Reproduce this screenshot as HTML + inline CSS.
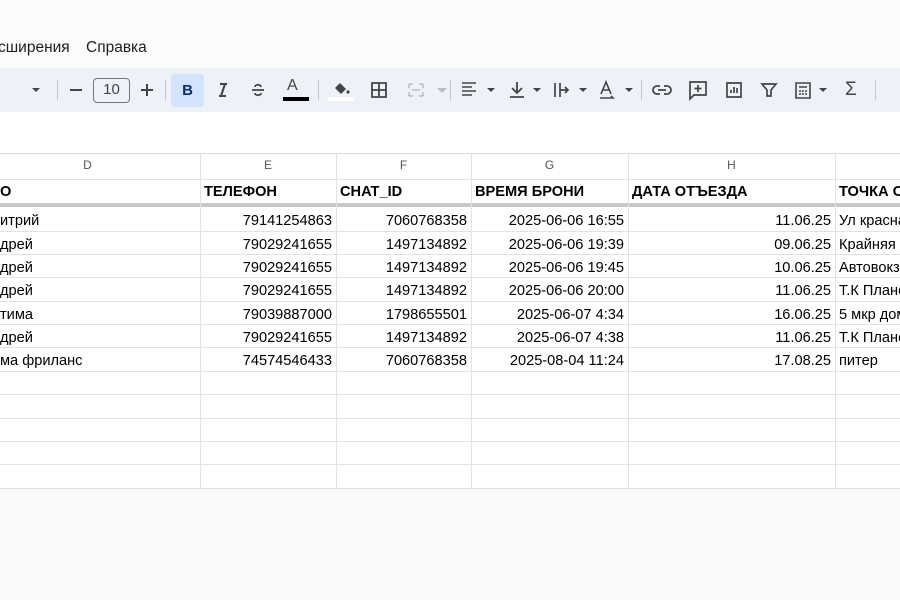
<!DOCTYPE html>
<html><head><meta charset="utf-8"><style>
*{margin:0;padding:0;box-sizing:border-box}
body{width:900px;height:600px;overflow:hidden;background:#f8f9fa;font-family:"Liberation Sans",Arial,sans-serif;position:relative;color:#000}
.a{position:absolute}
.top{left:0;top:0;width:900px;height:68px;background:#f9fbfd}
.tb{left:0;top:68px;width:900px;height:44px;background:#eef2f8}
.fx{left:0;top:112px;width:900px;height:41px;background:#fff}
.menu{top:39px;font-size:15.5px;color:#1f1f1f}
.ic{position:absolute;top:78px;width:24px;height:24px}
.sep{position:absolute;top:80px;width:1px;height:20px;background:#c7c7c7}
.grid{left:0;top:153px;width:900px;height:336px;background:#fff}
.hl{position:absolute;left:0;width:900px;height:1px;background:#e2e2e2}
.vl{position:absolute;top:153px;width:1px;height:336px;background:#e2e2e2}
.ch{position:absolute;top:158px;font-size:12px;color:#555;text-align:center}
.t{position:absolute;font-size:14.6px;white-space:nowrap;margin-top:2px}
.b{font-weight:bold}
.r{text-align:right}
</style></head><body>
<div class="a top"></div>
<div class="menu a" style="left:-2px">сширения</div>
<div class="menu a" style="left:86px">Справка</div>
<div class="a tb"></div>
<div class="a fx"></div>
<!-- toolbar -->
<svg class="ic" style="left:24px" viewBox="0 0 24 24"><path d="M8 10l4 4 4-4z" fill="#444"/></svg>
<div class="sep" style="left:57px"></div>
<svg class="ic" style="left:64px" viewBox="0 0 24 24"><path d="M6 12h12" stroke="#444" stroke-width="2"/></svg>
<div class="a" style="left:93px;top:78px;width:37px;height:25px;border:1.5px solid #747775;border-radius:4px;font-size:15px;color:#444;text-align:center;line-height:22px">10</div>
<svg class="ic" style="left:135px" viewBox="0 0 24 24"><path d="M6 12h12M12 6v12" stroke="#444" stroke-width="2"/></svg>
<div class="sep" style="left:165px"></div>
<div class="a" style="left:171px;top:74px;width:33px;height:33px;background:#d3e3fd;border-radius:4px;font-weight:bold;font-size:15px;color:#0b3069;text-align:center;line-height:33px">B</div>
<svg class="ic" style="left:211px" viewBox="0 0 24 24"><path d="M9 6h7M8 18h7M14 6l-4 12" stroke="#444" stroke-width="2" fill="none"/></svg>
<svg class="ic" style="left:246px" viewBox="0 0 24 24"><path d="M6 12h12M9 9c0-3 6-3 6 0M9 15c0 3 6 3 6 0" stroke="#444" stroke-width="1.8" fill="none"/></svg>
<div class="a" style="left:287px;top:77px;font-size:16px;color:#444">A</div>
<div class="a" style="left:283px;top:97px;width:26px;height:4px;background:#000"></div>
<div class="sep" style="left:318px"></div>
<svg class="ic" style="left:329px" viewBox="0 0 24 24"><path d="M6 10l5-5 6 6-5 5z" fill="#444"/><circle cx="19" cy="14" r="1.6" fill="#444"/></svg>
<div class="a" style="left:328px;top:97px;width:26px;height:4px;background:#fff"></div>
<svg class="ic" style="left:367px" viewBox="0 0 24 24"><path d="M5 5h14v14H5zM12 5v14M5 12h14" stroke="#444" stroke-width="1.8" fill="none"/></svg>
<svg class="ic" style="left:404px" viewBox="0 0 24 24"><path d="M5 6h4M5 18h4M15 6h4M15 18h4M5 6v4M5 14v4M19 6v4M19 14v4M8 12h8" stroke="#bbb" stroke-width="1.5" fill="none"/></svg>
<svg class="ic" style="left:430px" viewBox="0 0 24 24"><path d="M7 10l5 5 5-5z" fill="#bbb"/></svg>
<div class="sep" style="left:450px"></div>
<svg class="ic" style="left:459px" viewBox="0 0 24 24"><path d="M3 5h14M3 9h10M3 13h14M3 17h10" stroke="#444" stroke-width="1.6"/></svg>
<svg class="ic" style="left:481px" viewBox="0 0 24 24"><path d="M6 10l4 4 4-4z" fill="#444"/></svg>
<svg class="ic" style="left:505px" viewBox="0 0 24 24"><path d="M12 4v10M7 10l5 5 5-5M5 19h14" stroke="#444" stroke-width="1.8" fill="none"/></svg>
<svg class="ic" style="left:527px" viewBox="0 0 24 24"><path d="M6 10l4 4 4-4z" fill="#444"/></svg>
<svg class="ic" style="left:550px" viewBox="0 0 24 24"><path d="M5 5v14M10 5v14M10 12h8M15 9l3 3-3 3" stroke="#444" stroke-width="1.7" fill="none"/></svg>
<svg class="ic" style="left:573px" viewBox="0 0 24 24"><path d="M6 10l4 4 4-4z" fill="#444"/></svg>
<svg class="ic" style="left:596px" viewBox="0 0 24 24"><path d="M5 16L10 4l5 12M7 12h6M4 20h13l-2-2" stroke="#444" stroke-width="1.6" fill="none"/></svg>
<svg class="ic" style="left:619px" viewBox="0 0 24 24"><path d="M6 10l4 4 4-4z" fill="#444"/></svg>
<div class="sep" style="left:641px"></div>
<svg class="ic" style="left:650px" viewBox="0 0 24 24"><path d="M10 8H7a4 4 0 000 8h3M14 8h3a4 4 0 010 8h-3M8 12h8" stroke="#444" stroke-width="1.8" fill="none"/></svg>
<svg class="ic" style="left:686px" viewBox="0 0 24 24"><path d="M4 4h16v13H8l-4 4zM12 7v7M8.5 10.5h7" stroke="#444" stroke-width="1.7" fill="none"/></svg>
<svg class="ic" style="left:722px" viewBox="0 0 24 24"><path d="M5 5h14v14H5zM9 15v-3M12 15V9M15 15v-5" stroke="#444" stroke-width="1.7" fill="none"/></svg>
<svg class="ic" style="left:757px" viewBox="0 0 24 24"><path d="M5 6h14l-5 6v6h-4v-6z" stroke="#444" stroke-width="1.7" fill="none"/></svg>
<svg class="ic" style="left:791px" viewBox="0 0 24 24"><path d="M5 5h14v15H5zM8 9h8M8 13h2M11 13h2M14 13h2M8 16h2M11 16h2M14 16h2" stroke="#444" stroke-width="1.6" fill="none"/></svg>
<svg class="ic" style="left:813px" viewBox="0 0 24 24"><path d="M6 10l4 4 4-4z" fill="#444"/></svg>
<div class="a" style="left:845px;top:79px;font-size:19px;color:#444">Σ</div>
<div class="sep" style="left:875px"></div>
<!-- grid -->
<div class="a grid"></div>
<div class="a" style="left:0;top:153px;width:900px;height:27px;background:#fff"></div>
<div class="hl" style="top:153px;background:#d9d9d9"></div>
<div class="hl" style="top:179px"></div>
<div class="hl" style="top:203px;height:4px;background:#c8c8c8"></div>
<div class="hl" style="top:231px"></div><div class="hl" style="top:254px"></div><div class="hl" style="top:277px"></div><div class="hl" style="top:301px"></div><div class="hl" style="top:324px"></div><div class="hl" style="top:347px"></div><div class="hl" style="top:371px"></div><div class="hl" style="top:394px"></div><div class="hl" style="top:418px"></div><div class="hl" style="top:441px"></div><div class="hl" style="top:464px"></div><div class="hl" style="top:488px"></div>
<div class="vl" style="left:200px"></div><div class="vl" style="left:336px"></div><div class="vl" style="left:471px"></div><div class="vl" style="left:628px"></div><div class="vl" style="left:835px"></div>
<div class="ch" style="left:0;width:175px">D</div>
<div class="ch" style="left:200px;width:136px">E</div>
<div class="ch" style="left:336px;width:135px">F</div>
<div class="ch" style="left:471px;width:157px">G</div>
<div class="ch" style="left:628px;width:207px">H</div>
<div class="t b" style="left:0;top:182px">О</div>
<div class="t b" style="left:204px;top:182px">ТЕЛЕФОН</div>
<div class="t b" style="left:340px;top:182px">CHAT_ID</div>
<div class="t b" style="left:475px;top:182px">ВРЕМЯ БРОНИ</div>
<div class="t b" style="left:632px;top:182px">ДАТА ОТЪЕЗДА</div>
<div class="t b" style="left:839px;top:182px">ТОЧКА ОТ</div>

<div class="t" style="left:0;top:211px">итрий</div>
<div class="t" style="left:0;top:235px">дрей</div>
<div class="t" style="left:0;top:258px">дрей</div>
<div class="t" style="left:0;top:281px">дрей</div>
<div class="t" style="left:0;top:305px">тима</div>
<div class="t" style="left:0;top:328px">дрей</div>
<div class="t" style="left:0;top:351px">ма фриланс</div>

<div class="t r" style="right:568px;top:211px">79141254863</div>
<div class="t r" style="right:568px;top:235px">79029241655</div>
<div class="t r" style="right:568px;top:258px">79029241655</div>
<div class="t r" style="right:568px;top:281px">79029241655</div>
<div class="t r" style="right:568px;top:305px">79039887000</div>
<div class="t r" style="right:568px;top:328px">79029241655</div>
<div class="t r" style="right:568px;top:351px">74574546433</div>

<div class="t r" style="right:433px;top:211px">7060768358</div>
<div class="t r" style="right:433px;top:235px">1497134892</div>
<div class="t r" style="right:433px;top:258px">1497134892</div>
<div class="t r" style="right:433px;top:281px">1497134892</div>
<div class="t r" style="right:433px;top:305px">1798655501</div>
<div class="t r" style="right:433px;top:328px">1497134892</div>
<div class="t r" style="right:433px;top:351px">7060768358</div>

<div class="t r" style="right:276px;top:211px">2025-06-06 16:55</div>
<div class="t r" style="right:276px;top:235px">2025-06-06 19:39</div>
<div class="t r" style="right:276px;top:258px">2025-06-06 19:45</div>
<div class="t r" style="right:276px;top:281px">2025-06-06 20:00</div>
<div class="t r" style="right:276px;top:305px">2025-06-07 4:34</div>
<div class="t r" style="right:276px;top:328px">2025-06-07 4:38</div>
<div class="t r" style="right:276px;top:351px">2025-08-04 11:24</div>

<div class="t r" style="right:69px;top:211px">11.06.25</div>
<div class="t r" style="right:69px;top:235px">09.06.25</div>
<div class="t r" style="right:69px;top:258px">10.06.25</div>
<div class="t r" style="right:69px;top:281px">11.06.25</div>
<div class="t r" style="right:69px;top:305px">16.06.25</div>
<div class="t r" style="right:69px;top:328px">11.06.25</div>
<div class="t r" style="right:69px;top:351px">17.08.25</div>

<div class="t" style="left:839px;top:211px">Ул красная</div>
<div class="t" style="left:839px;top:235px">Крайняя</div>
<div class="t" style="left:839px;top:258px">Автовокзал</div>
<div class="t" style="left:839px;top:281px">Т.К Планета</div>
<div class="t" style="left:839px;top:305px">5 мкр дом</div>
<div class="t" style="left:839px;top:328px">Т.К Планета</div>
<div class="t" style="left:839px;top:351px">питер</div>
</body></html>
